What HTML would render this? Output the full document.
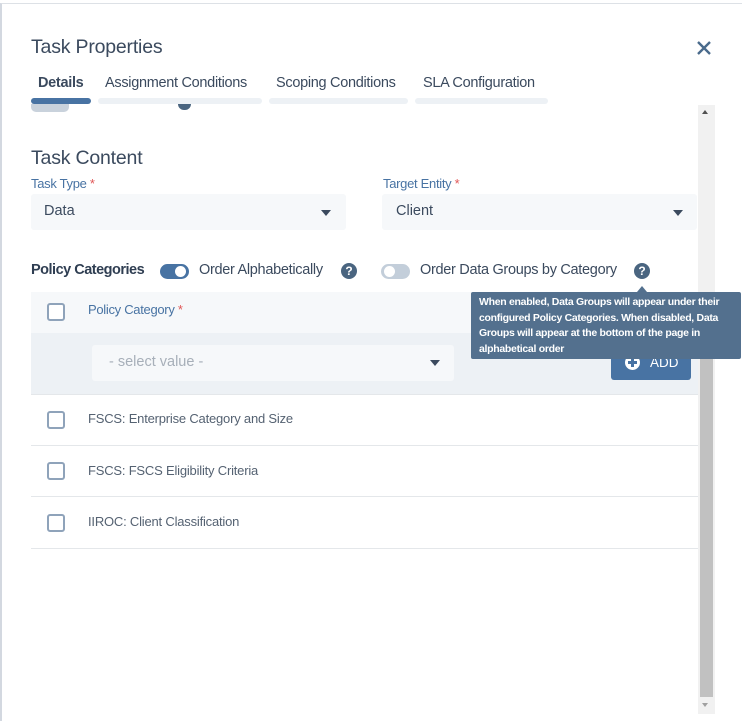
<!DOCTYPE html>
<html><head><style>
*{box-sizing:border-box;margin:0;padding:0}
body{width:742px;height:721px;background:#fff;font-family:"Liberation Sans",sans-serif;position:relative;overflow:hidden;color:#3b4a5e}
.a{position:absolute;white-space:nowrap}
.modal{position:absolute;left:0;top:3px;width:742px;height:718px;border-left:2px solid #d3d8e0;border-top:1px solid #dde1e6}
.tabbar{position:absolute;top:98px;height:6px;border-radius:3px;background:#edf1f5}
.sel{position:absolute;height:36px;background:#f6f8fa;border-radius:3px}
.tri{position:absolute;width:0;height:0;border-left:5px solid transparent;border-right:5px solid transparent;border-top:6px solid #3b4a5e}
.cb{position:absolute;left:47px;width:18px;height:18px;border:2px solid #8fa3ba;border-radius:3px;background:#fff}
.row{position:absolute;left:31px;width:667px;height:1px;background:#e4e7ea}
.q{position:absolute;width:16px;height:16px;border-radius:50%;background:#4a6580;color:#fff;font-size:12px;font-weight:bold;text-align:center;line-height:16px}
</style></head><body>
<div class="modal"></div>
<div class="a" style="left:31px;top:36px;font-size:19.5px;color:#3b4a5e;letter-spacing:-0.2px">Task Properties</div>
<svg class="a" style="left:696px;top:40px" width="16" height="16"><path d="M2 2L14 14M14 2L2 14" stroke="#4a6b8c" stroke-width="2.4"/></svg>
<div class="a" style="left:38px;top:75px;font-size:14.5px;font-weight:bold;color:#3b4a5e;letter-spacing:-0.3px">Details</div>
<div class="a" style="left:105px;top:75px;font-size:14.5px;color:#3b4a5e;letter-spacing:-0.3px">Assignment Conditions</div>
<div class="a" style="left:276px;top:75px;font-size:14.5px;color:#3b4a5e;letter-spacing:-0.3px">Scoping Conditions</div>
<div class="a" style="left:423px;top:75px;font-size:14.5px;color:#3b4a5e;letter-spacing:-0.3px">SLA Configuration</div>
<div class="tabbar" style="left:31px;width:60px;background:#4873a3"></div>
<div class="tabbar" style="left:98px;width:164px"></div>
<div class="tabbar" style="left:269px;width:139px"></div>
<div class="tabbar" style="left:415px;width:133px"></div>
<div class="a" style="left:31px;top:104px;width:38px;height:8px;background:#c9d2dc;border-radius:0 0 5px 5px"></div>
<div class="a" style="left:178px;top:104px;width:13px;height:6px;background:#4a6580;border-radius:0 0 7px 7px"></div>
<!-- scrollbar -->
<div class="a" style="left:698px;top:105px;width:17px;height:609px;background:#f1f1f1"></div>
<div class="a" style="left:700px;top:350px;width:13px;height:347px;background:#c1c1c1"></div>
<div class="tri" style="left:702px;top:110px;border-top:0;border-bottom:4px solid #505050;border-left-width:3.5px;border-right-width:3.5px"></div>
<div class="tri" style="left:702px;top:703px;border-top:4px solid #a0a0a0;border-left-width:3.5px;border-right-width:3.5px"></div>

<div class="a" style="left:31px;top:147px;font-size:19.5px;color:#3b4a5e;letter-spacing:-0.2px">Task Content</div>
<div class="a" style="left:31px;top:176px;font-size:13px;color:#4873a3;letter-spacing:-0.3px">Task Type <span style="color:#e05555">*</span></div>
<div class="a" style="left:383px;top:176px;font-size:13px;color:#4873a3;letter-spacing:-0.3px">Target Entity <span style="color:#e05555">*</span></div>
<div class="sel" style="left:31px;top:194px;width:315px"></div>
<div class="sel" style="left:382px;top:194px;width:315px"></div>
<div class="a" style="left:44px;top:203px;font-size:14.5px;color:#3b4a5e">Data</div>
<div class="a" style="left:396px;top:203px;font-size:14.5px;color:#3b4a5e">Client</div>
<div class="tri" style="left:321px;top:210px"></div>
<div class="tri" style="left:673px;top:210px"></div>

<div class="a" style="left:31px;top:262px;font-size:14.5px;font-weight:bold;color:#2f3e52;letter-spacing:-0.5px">Policy Categories</div>
<div class="a" style="left:160px;top:264px;width:29px;height:15px;border-radius:8px;background:#4873a3"></div>
<div class="a" style="left:175px;top:266px;width:11px;height:11px;border-radius:50%;background:#fff"></div>
<div class="a" style="left:199px;top:262px;font-size:14.5px;color:#3b4a5e;letter-spacing:-0.3px">Order Alphabetically</div>
<div class="q" style="left:341px;top:263px">?</div>
<div class="a" style="left:381px;top:264px;width:29px;height:15px;border-radius:8px;background:#c3ceda"></div>
<div class="a" style="left:384px;top:266px;width:11px;height:11px;border-radius:50%;background:#fff"></div>
<div class="a" style="left:420px;top:262px;font-size:14.5px;color:#3b4a5e;letter-spacing:-0.3px">Order Data Groups by Category</div>
<div class="q" style="left:634px;top:263px">?</div>

<div class="a" style="left:31px;top:292px;width:667px;height:41px;background:#f6f8fa"></div>
<div class="cb" style="top:303px"></div>
<div class="a" style="left:88px;top:302px;font-size:13px;color:#4873a3;letter-spacing:-0.3px">Policy Category <span style="color:#e05555">*</span></div>
<div class="a" style="left:31px;top:333px;width:667px;height:61px;background:#edf1f5"></div>
<div class="sel" style="left:92px;top:345px;width:362px;height:36px;background:#f6f8fa"></div>
<div class="a" style="left:109px;top:354px;font-size:14.5px;color:#a7afb9">- select value -</div>
<div class="tri" style="left:430px;top:360px"></div>
<div class="a" style="left:611px;top:345px;width:80px;height:35px;background:#4873a3;border-radius:3px"></div>
<div class="a" style="left:625px;top:355px;width:15px;height:15px;border-radius:50%;background:#fff"></div>
<div class="a" style="left:631px;top:358px;width:3px;height:9px;background:#4873a3"></div>
<div class="a" style="left:628px;top:361px;width:9px;height:3px;background:#4873a3"></div>
<div class="a" style="left:650px;top:355px;font-size:13.5px;color:#fff">ADD</div>
<div class="row" style="top:394px"></div>

<div class="cb" style="top:411px"></div>
<div class="a" style="left:88px;top:411px;font-size:13px;color:#556272;letter-spacing:-0.2px">FSCS: Enterprise Category and Size</div>
<div class="row" style="top:445px"></div>
<div class="cb" style="top:462px"></div>
<div class="a" style="left:88px;top:463px;font-size:13px;color:#556272;letter-spacing:-0.2px">FSCS: FSCS Eligibility Criteria</div>
<div class="row" style="top:496px"></div>
<div class="cb" style="top:514px"></div>
<div class="a" style="left:88px;top:514px;font-size:13px;color:#556272;letter-spacing:-0.2px">IIROC: Client Classification</div>
<div class="row" style="top:548px"></div>

<!-- tooltip -->
<div class="tri" style="left:637px;top:286px;border-top:0;border-bottom:6px solid #53708e"></div>
<div class="a" style="left:471px;top:292px;width:270px;height:67px;background:#53708e;border-radius:2px;color:#fff;font-size:10.5px;font-weight:bold;line-height:15.5px;padding:3px 0 0 8px;white-space:normal;letter-spacing:-0.3px">When enabled, Data Groups will appear under their configured Policy Categories. When disabled, Data Groups will appear at the bottom of the page in alphabetical order</div>
</body></html>
